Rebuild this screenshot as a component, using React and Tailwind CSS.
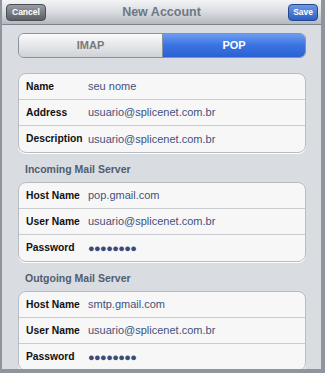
import React from "react";

const font = { fontFamily: '"Liberation Sans", Arial, sans-serif' };

function Row({ label, value, last, secret }) {
  return (
    <div
      className={`flex items-center h-[26px] pl-[7px] ${
        last ? "" : "border-b border-[#c9cbce]"
      }`}
    >
      <div className="w-[62px] text-[10.3px] font-bold text-[#111] whitespace-nowrap">
        {label}
      </div>
      {secret ? (
        <div className="text-[11px] tracking-[-0.6px] text-[#3b4a78] leading-none">
          ●●●●●●●●
        </div>
      ) : (
        <div className="text-[11px] text-[#42527c]">{value}</div>
      )}
    </div>
  );
}

function Card({ rows }) {
  return (
    <div className="bg-[#f7f7f7] rounded-[8px] border border-[#b7bcc2] shadow-[0_1px_0_#ffffff]">
      {rows.map((r, i) => (
        <Row key={r.label} {...r} last={i === rows.length - 1} />
      ))}
    </div>
  );
}

function Header({ children }) {
  return (
    <div className="h-[29px] flex items-center pl-[7px] pt-[4px] text-[10.5px] font-bold text-[#525c6e]">
      {children}
    </div>
  );
}

export default function App() {
  return (
    <div
      style={font}
      className="w-[325px] h-[373px] bg-[#d9dde2] border-l-2 border-r-4 border-b-4 border-[#8f959c] overflow-hidden"
    >
      <div className="h-[25px] flex items-center justify-between pl-[4px] pr-[3px] bg-gradient-to-b from-[#f3f4f6] via-[#d9dce0] to-[#b3b9c1] border-b border-[#7d848c] relative">
        <button className="h-[17px] px-[5px] rounded-[4px] border border-[#4b4f55] bg-gradient-to-b from-[#9a9ea4] to-[#5b5f65] text-white text-[8.5px] font-bold">
          Cancel
        </button>
        <div className="absolute left-0 right-0 text-center text-[12.5px] font-bold text-[#6f7783] pointer-events-none">
          New Account
        </div>
        <button className="h-[17px] px-[4px] rounded-[4px] border border-[#24478f] bg-gradient-to-b from-[#6d98e2] to-[#2c5ec4] text-white text-[8.5px] font-bold">
          Save
        </button>
      </div>

      <div className="pl-[16px] pr-[15px]">
        <div className="mt-[8px] h-[25px] flex rounded-[6px] border border-[#8b929b] overflow-hidden">
          <div className="w-[144px] flex items-center justify-center bg-gradient-to-b from-[#fbfbfb] to-[#cfd2d6] text-[11px] font-bold text-[#7a7a7a] border-r border-[#8b929b]">
            IMAP
          </div>
          <div className="flex-1 flex items-center justify-center bg-gradient-to-b from-[#6a9cf2] via-[#3a73e0] to-[#2a62d4] text-[11px] font-bold text-white">
            POP
          </div>
        </div>

        <div className="mt-[15px]">
          <Card
            rows={[
              { label: "Name", value: "seu nome" },
              { label: "Address", value: "usuario@splicenet.com.br" },
              { label: "Description", value: "usuario@splicenet.com.br" },
            ]}
          />
        </div>

        <Header>Incoming Mail Server</Header>
        <Card
          rows={[
            { label: "Host Name", value: "pop.gmail.com" },
            { label: "User Name", value: "usuario@splicenet.com.br" },
            { label: "Password", secret: true },
          ]}
        />

        <Header>Outgoing Mail Server</Header>
        <Card
          rows={[
            { label: "Host Name", value: "smtp.gmail.com" },
            { label: "User Name", value: "usuario@splicenet.com.br" },
            { label: "Password", secret: true },
          ]}
        />
      </div>
    </div>
  );
}
